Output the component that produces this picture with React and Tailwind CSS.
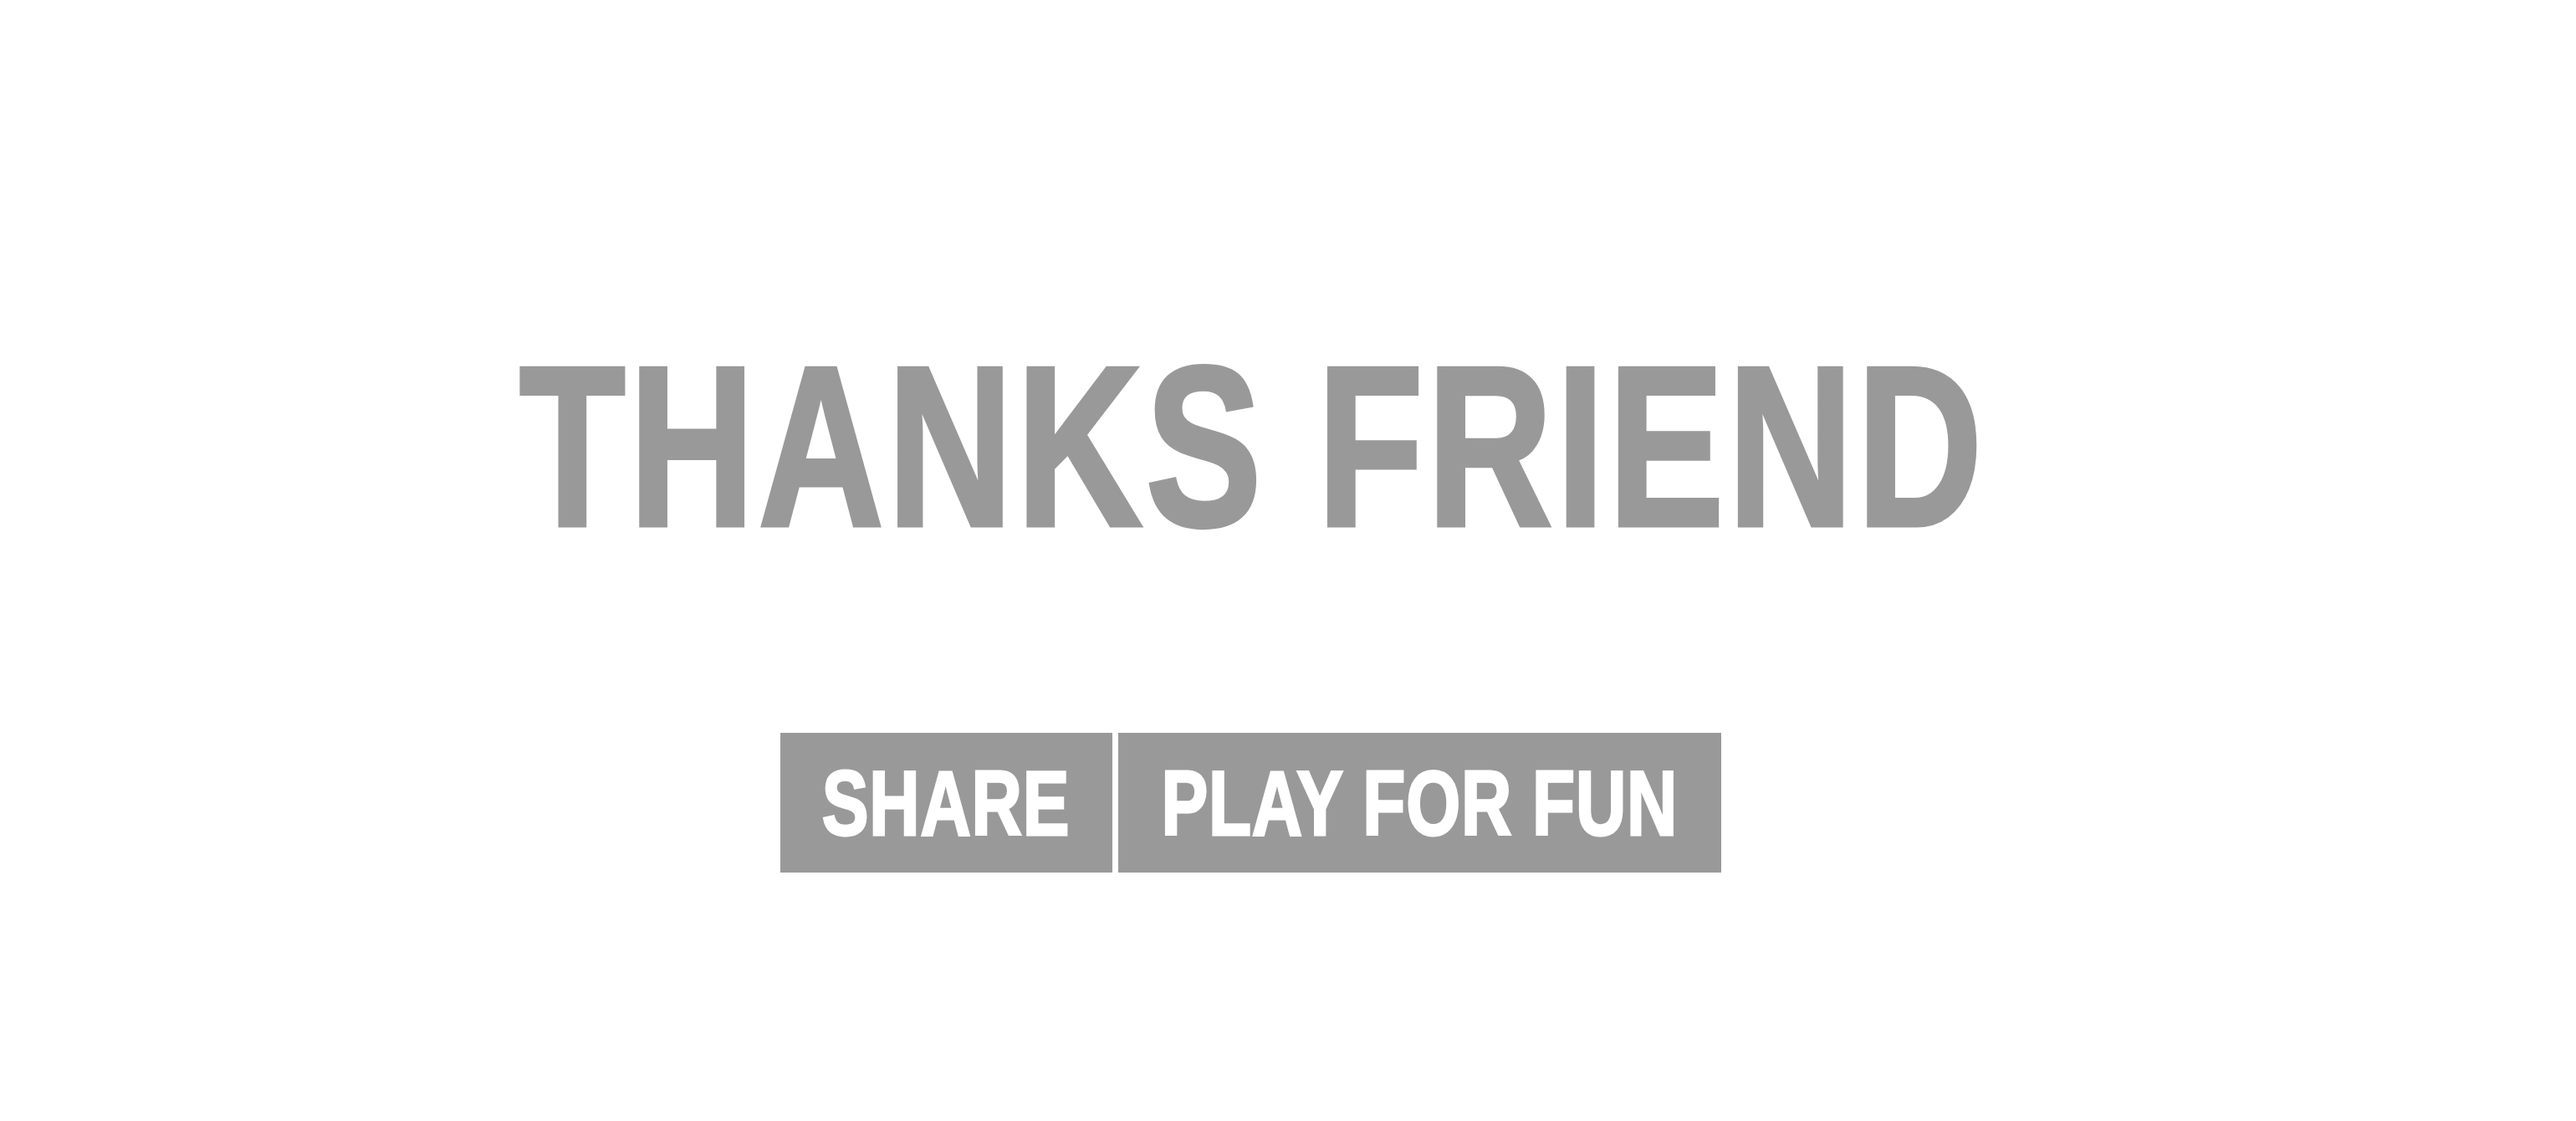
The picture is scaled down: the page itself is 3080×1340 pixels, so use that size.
const sans = { fontFamily: '"Liberation Sans", Arial, sans-serif' };

function ActionButton({ label, width }) {
  return (
    <button className={`${width} h-[167px] bg-[#999999] text-white flex items-center justify-center`}>
      <span className="inline-block whitespace-nowrap text-[110px] leading-none font-bold tracking-[1px] scale-x-[0.76] [-webkit-text-stroke:3px_#ffffff]">
        {label}
      </span>
    </button>
  );
}

export default function App() {
  return (
    <div className="w-full h-[1340px] bg-white overflow-hidden" style={sans}>
      <div className="pl-[621px] pt-[397px]">
        <h1 className="text-[273px] leading-none font-bold tracking-[6px] text-[#999999] whitespace-nowrap origin-left scale-x-[0.76] [-webkit-text-stroke:5px_#999999]">
          THANKS FRIEND
        </h1>
      </div>
      <div className="flex gap-[7px] pl-[933px] pt-[206px]">
        <ActionButton label="SHARE" width="w-[397px]" />
        <ActionButton label="PLAY FOR FUN" width="w-[721px]" />
      </div>
    </div>
  );
}
